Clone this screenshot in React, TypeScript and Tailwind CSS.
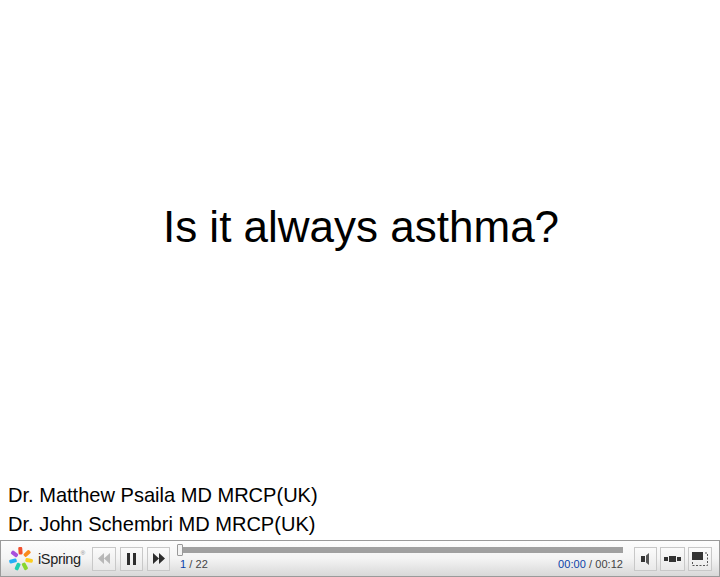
const petals = [
  { angle: -4, color: "#f2502e" },
  { angle: 48, color: "#fa8a1c" },
  { angle: 100, color: "#fbcd1e" },
  { angle: 152, color: "#8ad62e" },
  { angle: 204, color: "#1fcfb0" },
  { angle: 256, color: "#25aef5" },
  { angle: 308, color: "#a94fdc" },
];

const Logo = () => (
  <svg width="24" height="24" viewBox="0 0 24 24" className="shrink-0">
    {petals.map((p) => (
      <rect
        key={p.angle}
        x="10"
        y="0"
        width="4"
        height="7.5"
        rx="1.3"
        fill={p.color}
        transform={`rotate(${p.angle} 12 12)`}
      />
    ))}
  </svg>
);

const CtrlButton = ({ children, className = "w-6" }: { children: React.ReactNode; className?: string }) => (
  <div className={`h-6 flex items-center justify-center border border-[#c8c8c8] bg-gradient-to-b from-[#fbfbfb] to-[#e9e9e9] ${className}`}>
    {children}
  </div>
);

const App = () => {
  return (
    <div className="w-[720px] h-[577px] flex flex-col bg-white font-['Liberation_Sans',Arial,sans-serif] overflow-hidden">
      <main className="flex-1 flex flex-col">
        <div className="h-[455px] flex items-end justify-center">
          <h1 className="text-[44px] leading-[50px] text-black pb-[203px] pl-[2px]">Is it always asthma?</h1>
        </div>
        <div className="pl-2 pt-[26px] text-[20.06px] leading-[29px] text-black">
          <p>Dr. Matthew Psaila MD MRCP(UK)</p>
          <p>Dr. John Schembri MD MRCP(UK)</p>
        </div>
      </main>

      <footer className="h-[37px] flex items-center border border-[#9a9a9a] bg-gradient-to-b from-[#fdfdfd] via-[#f4f4f4] to-[#d8d8d8]">
        <div className="w-[91px] pl-[8px] flex items-center gap-[5px] shrink-0">
          <Logo />
          <span className="text-[14.5px] text-[#222] tracking-[-0.35px] pt-[2px]">
            iSpring<sup className="text-[6px] text-[#888] align-super">®</sup>
          </span>
        </div>
        <div className="flex gap-[4px] shrink-0">
          <CtrlButton>
            <svg width="12" height="11" viewBox="0 0 12 11"><path d="M6 0v11L0 5.5zM12 0v11L6 5.5z" fill="#b8b8b8" /></svg>
          </CtrlButton>
          <CtrlButton className="w-[23px]">
            <svg width="9" height="12" viewBox="0 0 9 12"><path d="M0 0h3v12H0zM6 0h3v12H6z" fill="#2e2e2e" /></svg>
          </CtrlButton>
          <CtrlButton className="w-[23px]">
            <svg width="12" height="11" viewBox="0 0 12 11"><path d="M0 0v11l6-5.5zM6 0v11l6-5.5z" fill="#2e2e2e" /></svg>
          </CtrlButton>
        </div>
        <div className="ml-[8px] w-[445px] shrink-0 flex flex-col">
          <div className="relative h-[6px] bg-[#a0a0a0] mt-[1px]">
            <div className="absolute left-[-1px] top-[-3px] w-[6px] h-[12px] border border-[#999] bg-[#f4f4f4] rounded-[1px]" />
          </div>
          <div className="flex justify-between text-[11px] tracking-[0.05px] leading-[13px] mt-[5px] text-[#444] pl-[2px]">
            <span><span className="text-[#0b3fa8]">1</span> / 22</span>
            <span><span className="text-[#0b3fa8]">00:00</span> / 00:12</span>
          </div>
        </div>
        <div className="ml-[11px] flex gap-[3px] shrink-0">
          <CtrlButton className="w-[23px]">
            <svg width="10" height="14" viewBox="0 0 10 14"><path d="M0 4h4v6H0z" fill="#333" /><path d="M5 3.5 8 1v12l-3-2.5z" fill="#555" /></svg>
          </CtrlButton>
          <CtrlButton className="w-[25px]">
            <svg width="17" height="6" viewBox="0 0 17 6"><path d="M0 1h4v4H0zM5 0h7v6H5zM13 1h4v4h-4z" fill="#333" /></svg>
          </CtrlButton>
          <CtrlButton className="w-[24px]">
            <svg width="16" height="14" viewBox="0 0 16 14"><path d="M0 0h11v8H0z" fill="#333" /><path d="M13 1h2.5v12.5H0.5V10" fill="none" stroke="#555" strokeDasharray="2 1.5" /></svg>
          </CtrlButton>
        </div>
      </footer>
    </div>
  );
};

export default App;
